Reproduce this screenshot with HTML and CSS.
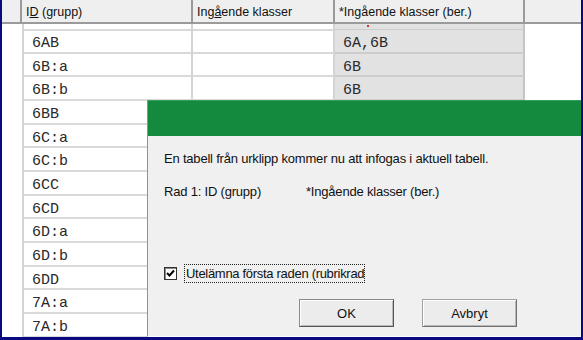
FILE: index.html
```html
<!DOCTYPE html>
<html lang="sv">
<head>
<meta charset="utf-8">
<title>Infoga tabell</title>
<link rel="stylesheet" href="styles.css">
</head>
<body>
<div class="frame">
  <div class="grid">
    <div class="hcell hrow"></div>
    <div class="hcell">I<span class="ul">D</span> (grupp)</div>
    <div class="hcell">Ing<span class="ul">å</span>ende klasser</div>
    <div class="hcell mark">*Ingående klasser (ber.)<span class="reddot"></span></div>
    <div class="hcell last"></div>

    <div class="rh"></div><div class="c1 partial"></div><div class="c2 partial"></div><div class="c3 partial"></div><div class="c4"></div>

    <div class="rh"></div><div class="c1">6AB</div><div class="c2"></div><div class="c3">6A,6B</div><div class="c4"></div>
    <div class="rh"></div><div class="c1">6B:a</div><div class="c2"></div><div class="c3">6B</div><div class="c4"></div>
    <div class="rh"></div><div class="c1">6B:b</div><div class="c2"></div><div class="c3">6B</div><div class="c4"></div>
    <div class="rh"></div><div class="c1">6BB</div><div class="c2"></div><div class="c3"></div><div class="c4"></div>
    <div class="rh"></div><div class="c1">6C:a</div><div class="c2"></div><div class="c3"></div><div class="c4"></div>
    <div class="rh"></div><div class="c1">6C:b</div><div class="c2"></div><div class="c3"></div><div class="c4"></div>
    <div class="rh"></div><div class="c1">6CC</div><div class="c2"></div><div class="c3"></div><div class="c4"></div>
    <div class="rh"></div><div class="c1">6CD</div><div class="c2"></div><div class="c3"></div><div class="c4"></div>
    <div class="rh"></div><div class="c1">6D:a</div><div class="c2"></div><div class="c3"></div><div class="c4"></div>
    <div class="rh"></div><div class="c1">6D:b</div><div class="c2"></div><div class="c3"></div><div class="c4"></div>
    <div class="rh"></div><div class="c1">6DD</div><div class="c2"></div><div class="c3"></div><div class="c4"></div>
    <div class="rh"></div><div class="c1">7A:a</div><div class="c2"></div><div class="c3"></div><div class="c4"></div>
    <div class="rh"></div><div class="c1">7A:b</div><div class="c2"></div><div class="c3"></div><div class="c4"></div>
  </div>

  <div class="dialog">
    <div class="titlebar"></div>
    <div class="dbody">
      <p class="msg">En tabell från urklipp kommer nu att infogas i aktuell tabell.</p>
      <p class="msg row2"><span class="col-a">Rad 1: ID (grupp)</span><span>*Ingående klasser (ber.)</span></p>
      <div class="check">
        <span class="box"><svg width="9" height="9" viewBox="0 0 9 9"><path d="M1 4 L3.5 6.5 L8 1.5" fill="none" stroke="#000" stroke-width="2"/></svg></span>
        <span class="label">Utelämna första raden (rubrikrad</span>
      </div>
      <div class="buttons">
        <button class="btn ok">OK</button>
        <button class="btn">Avbryt</button>
      </div>
    </div>
  </div>
</div>
</body>
</html>
```
FILE: styles.css
```css
html, body {
  margin: 0;
  padding: 0;
}
body {
  width: 583px;
  height: 340px;
  overflow: hidden;
  background: #fff;
}
.frame {
  position: relative;
  width: 583px;
  height: 340px;
  box-sizing: border-box;
  border-left: 2px solid #0a0a80;
  border-right: 2px solid #0a0a80;
  border-bottom: 3px solid #0a0a80;
  overflow: hidden;
  background: #fff;
}
.grid {
  display: grid;
  grid-template-columns: 20px 171px 142px 190px 1fr;
  grid-template-rows: 24px 6px;
  grid-auto-rows: 23.67px;
}
.hcell {
  background: #efefef;
  border-right: 2px solid #9a9a9a;
  border-bottom: 2px solid #9a9a9a;
  box-sizing: border-box;
  font-family: "Liberation Sans", Arial, sans-serif;
  font-size: 12.5px;
  color: #111;
  padding: 5px 0 0 4px;
  white-space: nowrap;
  position: relative;
}
.hcell.hrow { padding: 0; }
.hcell.last { border-right: none; }
.ul { text-decoration: underline; }
.reddot {
  position: absolute;
  left: 32px;
  top: 25px;
  width: 2px;
  height: 2px;
  background: #e03030;
  z-index: 2;
}
.rh { background: #fff; }
.c1, .c2, .c3 {
  box-sizing: border-box;
  border-bottom: 2px solid #d9d9d9;
  border-right: 2px solid #d4d4d4;
  font-family: "Liberation Mono", "Courier New", monospace;
  font-size: 15px;
  color: #2a2a2a;
  padding: 5px 0 0 10px;
  white-space: nowrap;
}
.c1 { border-left: 2px solid #d4d4d4; padding-left: 8px; }
.c3 {
  background: #e2e2e2;
  border-bottom-color: #cdcdcd;
  border-right: 2px solid #c4c4c4;
  padding-left: 8px;
}
.c4 { background: #fff; }

.dialog {
  position: absolute;
  left: 145px;
  top: 100px;
  right: 0;
  bottom: 0;
  background: #f0f0f0;
  border-left: 1px solid #5fae80;
  border-bottom: 1px solid #fff;
  display: flex;
  flex-direction: column;
}
.titlebar {
  height: 36px;
  background: #138a3e;
  border-top: 1px solid #3a9c5c;
  box-sizing: border-box;
}
.dbody {
  padding: 15px 0 0 16px;
  font-family: "Liberation Sans", Arial, sans-serif;
  font-size: 13px;
  color: #111;
}
.msg {
  margin: 0;
  line-height: 15px;
  letter-spacing: -0.2px;
  white-space: nowrap;
}
.row2 { margin-top: 18px; }
.col-a { display: inline-block; width: 142px; }
.check {
  margin-top: 65px;
  display: flex;
  align-items: center;
  gap: 7px;
  height: 19px;
}
.box {
  width: 13px;
  height: 13px;
  box-sizing: border-box;
  border: 1px solid #333;
  box-shadow: inset 1px 1px 0 #888;
  background: #fff;
  display: flex;
  align-items: center;
  justify-content: center;
}
.label {
  border: 1px dotted #222;
  padding: 1px 0 1px 1px;
  line-height: 15px;
  letter-spacing: -0.3px;
  white-space: nowrap;
}
.buttons {
  margin-top: 16px;
  margin-left: 135px;
  display: flex;
  gap: 28px;
}
.btn {
  width: 95px;
  height: 28px;
  font-family: "Liberation Sans", Arial, sans-serif;
  font-size: 13px;
  color: #111;
  background: #ececec;
  border: 1px solid #a0a0a0;
  border-right-color: #707070;
  border-bottom-color: #707070;
  box-shadow: inset 1px 1px 0 #fff, inset -1px -1px 0 #b8b8b8;
  padding: 0;
}
.btn.ok { border-color: #8a8a8a; border-right-color: #555; border-bottom-color: #555; }
```
